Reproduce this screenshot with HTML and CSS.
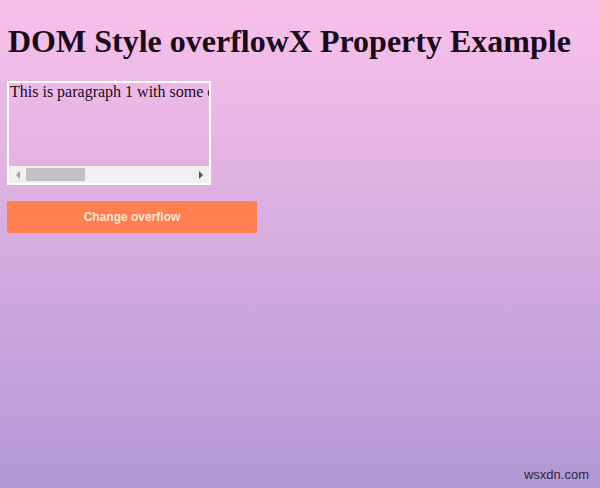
FILE: index.html
```html
<!DOCTYPE html>
<html>
<head>
<meta charset="utf-8">
<title>DOM Style overflowX Property Example</title>
<link rel="stylesheet" href="styles.css">
</head>
<body>
<h1 class="title">DOM Style overflowX Property Example</h1>
<div class="box">
  <div class="box-content">
    <p class="para">This is paragraph 1 with some content that overflows the box horizontally.</p>
  </div>
  <div class="hscroll">
    <div class="arrow arrow-left"></div>
    <div class="track"><div class="thumb"></div></div>
    <div class="arrow arrow-right"></div>
  </div>
</div>
<button class="btn">Change overflow</button>
<div class="watermark">wsxdn.com</div>
</body>
</html>
```

FILE: styles.css
```css
html {
  height: 100%;
  background: linear-gradient(to bottom, #f9c1ea 0%, #b298d6 100%);
}
body {
  margin: 0;
  padding: 8px 8px 0 7px;
  height: 100%;
  box-sizing: border-box;
  font-family: "Liberation Serif", "Times New Roman", serif;
  color: #1a0a1a;
  position: relative;
}
.title {
  font-size: 32px;
  font-weight: bold;
  margin: 15px 0 21px 1px;
  line-height: 37px;
}
.box {
  width: 200px;
  height: 100px;
  border: 2px solid #ffffff;
  display: flex;
  flex-direction: column;
}
.box-content {
  flex: 1;
  overflow: hidden;
}
.para {
  margin: 0;
  font-size: 16px;
  line-height: 18px;
  white-space: nowrap;
  padding-left: 1px;
}
.hscroll {
  height: 17px;
  background: #f0f0f0;
  display: flex;
  align-items: center;
}
.arrow {
  width: 17px;
  height: 17px;
  display: flex;
  align-items: center;
  justify-content: center;
}
.arrow-left::before {
  content: "";
  border-top: 4px solid transparent;
  border-bottom: 4px solid transparent;
  border-right: 4px solid #a3a3a3;
}
.arrow-right::before {
  content: "";
  border-top: 4px solid transparent;
  border-bottom: 4px solid transparent;
  border-left: 4px solid #505050;
}
.track {
  flex: 1;
  height: 13px;
  display: flex;
  align-items: stretch;
}
.thumb {
  width: 59px;
  background: #c1c1c1;
}
.btn {
  display: block;
  margin-top: 16px;
  width: 250px;
  height: 32px;
  border: none;
  border-radius: 2px;
  background: #ff7f50;
  color: #fbe5d6;
  font-family: "Liberation Sans", Arial, sans-serif;
  font-weight: bold;
  font-size: 12px;
  padding: 0;
}
.watermark {
  position: absolute;
  right: 11px;
  bottom: 6px;
  font-family: "Liberation Sans", Arial, sans-serif;
  font-size: 13px;
  color: #2a2a3a;
}
```
